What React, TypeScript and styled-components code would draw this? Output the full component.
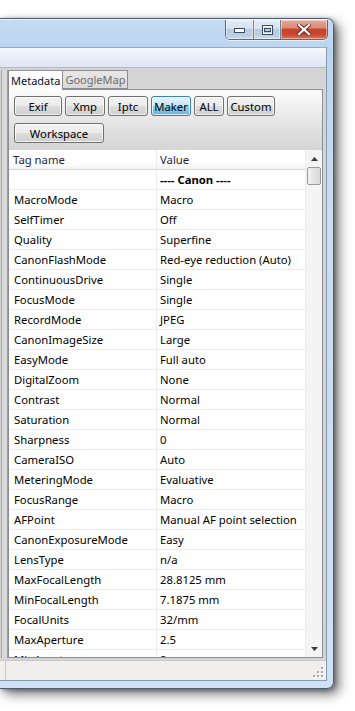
import React from "react";
import styled, { createGlobalStyle } from "styled-components";

const Global = createGlobalStyle`
  html, body { margin: 0; padding: 0; background: #ffffff; }
  body { width: 355px; height: 711px; overflow: hidden; font-family: "Noto Sans", "Open Sans", sans-serif; font-size: 11.3px; color: #000; }
  * { box-sizing: border-box; }
`;

const Page = styled.div`
  width: 355px;
  height: 711px;
  padding-top: 18px;
  overflow: hidden;
`;

const Window = styled.div`
  width: 334px;
  height: 671px;
  display: flex;
  flex-direction: column;
  background: linear-gradient(180deg, #c4dbf2 0px, #bcd5ef 30px, #c9ddf3 200px, #cfe2f5 100%);
  border: 1px solid #4b5e74;
  border-left: none;
  border-radius: 0 7px 7px 0;
  box-shadow: 5px 5px 12px rgba(0, 0, 0, 0.55), 1px 1px 4px rgba(0, 0, 0, 0.35);
`;

const TitleBar = styled.div`
  flex: none;
  height: 28px;
  display: flex;
  justify-content: flex-end;
  align-items: flex-start;
  padding-right: 5px;
  border-top: 1px solid rgba(255, 255, 255, 0.7);
  border-radius: 0 6px 0 0;
`;

const CaptionGroup = styled.div`
  display: flex;
  height: 20px;
  border: 1px solid #5a6b80;
  border-top: none;
  border-radius: 0 0 5px 5px;
  overflow: hidden;
  box-shadow: 0 1px 0 rgba(255, 255, 255, 0.6);
`;

const CaptionButton = styled.div<{ $w: number; $close?: boolean }>`
  width: ${(p) => p.$w}px;
  height: 100%;
  display: flex;
  align-items: center;
  justify-content: center;
  & + & {
    border-left: 1px solid #6f8196;
  }
  background: ${(p) =>
    p.$close
      ? "linear-gradient(180deg, #e9aa9c 0%, #dd8a78 40%, #c8452c 50%, #c8452c 75%, #db7559 100%)"
      : "linear-gradient(180deg, #e4edf7 0%, #d3e1f0 45%, #b9cbe0 50%, #bccee2 80%, #cbdcef 100%)"};
  box-shadow: inset 0 0 0 1px rgba(255, 255, 255, 0.45);
`;

const Body = styled.div`
  flex: 1;
  min-height: 0;
  display: flex;
  padding-right: 6px;
  padding-bottom: 7px;
`;

const Client = styled.div`
  flex: 1;
  min-height: 0;
  display: flex;
  flex-direction: column;
  border-right: 1px solid #8799ad;
  border-bottom: 1px solid #8799ad;
  background: #f0f0f0;
`;

const MenuStrip = styled.div`
  flex: none;
  height: 21px;
  background: linear-gradient(180deg, #f6f8fc 0%, #e8edf7 50%, #dfe6f2 100%);
  border-top: 1px solid #9aaabd;
  border-bottom: 1px solid #b5b9c2;
`;

const Main = styled.div`
  flex: 1;
  min-height: 0;
  display: flex;
  background: #d4d4d4;
  padding: 2px 3px 2px 0;
`;

const LeftStub = styled.div`
  width: 7px;
  margin-left: 1px;
  border-left: 1px solid #a9a9a9;
  border-right: 1px solid #9d9d9d;
  background: #d9d9d9;
`;

const TabWidget = styled.div`
  flex: 1;
  min-height: 0;
  display: flex;
  flex-direction: column;
`;

const TabBar = styled.div`
  flex: none;
  display: flex;
  height: 19px;
  align-items: flex-end;
`;

const Tab = styled.div<{ $active?: boolean }>`
  height: ${(p) => (p.$active ? "20px" : "19px")};
  padding: 0 2px 1px;
  display: flex;
  align-items: center;
  font-size: 11px;
  border: 1px solid #8c8e94;
  border-bottom: ${(p) => (p.$active ? "none" : "1px solid #8c8e94")};
  border-left: ${(p) => (p.$active ? "1px solid #8c8e94" : "none")};
  background: ${(p) => (p.$active ? "#ffffff" : "linear-gradient(180deg, #e8e8e8, #d9d9d9)")};
  color: ${(p) => (p.$active ? "#0c1030" : "#6d6d6d")};
  position: relative;
  z-index: ${(p) => (p.$active ? 1 : 0)};
  margin-bottom: ${(p) => (p.$active ? "-1px" : "0")};
`;

const Pane = styled.div`
  flex: 1;
  min-height: 0;
  display: flex;
  flex-direction: column;
  border: 1px solid #8c8e94;
  background: linear-gradient(180deg, #fcfcfc 0px, #e6e6e6 30px, #d5d5d5 60px, #d3d3d3 100%);
`;

const ButtonArea = styled.div`
  flex: none;
  display: flex;
  flex-direction: column;
  gap: 7px;
  padding: 6px 0 7px 5px;
`;

const ButtonRow = styled.div`
  display: flex;
  gap: 3px;
`;

const Button = styled.div<{ $w: number; $on?: boolean }>`
  width: ${(p) => p.$w}px;
  height: 20px;
  display: flex;
  align-items: center;
  justify-content: center;
  border: 1px solid ${(p) => (p.$on ? "#3c7fb1" : "#707070")};
  border-radius: 3px;
  color: #000;
  background: ${(p) =>
    p.$on
      ? "linear-gradient(180deg, #e5f4fc 0%, #c4e5f6 50%, #98d1ef 51%, #68b3db 100%)"
      : "linear-gradient(180deg, #f2f2f2 0%, #ebebeb 50%, #dddddd 51%, #cfcfcf 100%)"};
  box-shadow: inset 0 0 0 1px rgba(255, 255, 255, 0.7);
`;

const TableWrap = styled.div`
  flex: 1;
  min-height: 0;
  display: flex;
  background: #ffffff;
  overflow: hidden;
`;

const Grid = styled.div`
  flex: 1;
  display: flex;
  flex-direction: column;
  overflow: hidden;
`;

const Row = styled.div<{ $head?: boolean }>`
  height: 20px;
  flex: none;
  display: grid;
  grid-template-columns: 147px 1fr;
  background: ${(p) => (p.$head ? "linear-gradient(180deg, #ffffff 0%, #ffffff 60%, #f3f4f6 100%)" : "#ffffff")};
  border-bottom: 1px solid ${(p) => (p.$head ? "#d5d5d5" : "#ececec")};
`;

const Cell = styled.div<{ $bold?: boolean; $head?: boolean }>`
  display: flex;
  align-items: center;
  padding-left: ${(p) => (p.$head ? "4px" : "5px")};
  white-space: nowrap;
  overflow: hidden;
  font-weight: ${(p) => (p.$bold ? 700 : 400)};
  color: ${(p) => (p.$head ? "#1e2340" : "#000")};
  & + & {
    border-left: 1px solid #ececec;
    padding-left: 3px;
  }
`;

const ScrollBar = styled.div`
  width: 17px;
  display: flex;
  flex-direction: column;
  background: #f4f4f4;
  border-left: 1px solid #ececec;
`;

const ScrollArrow = styled.div`
  height: 17px;
  flex: none;
  display: flex;
  align-items: center;
  justify-content: center;
`;

const Thumb = styled.div`
  flex: none;
  height: 18px;
  margin: 0 1px;
  border: 1px solid #9a9a9a;
  border-radius: 2px;
  background: linear-gradient(90deg, #f3f3f3, #e4e4e4 50%, #d9d9d9);
`;

const Track = styled.div`
  flex: 1;
`;

const StatusBar = styled.div`
  flex: none;
  height: 20px;
  display: flex;
  background: #f0efee;
  border-top: 1px solid #c9c9c9;
  position: relative;
`;

const StatusSeg = styled.div`
  width: 6px;
  border-right: 1px solid #c8c8c8;
`;

const Grip = styled.svg`
  position: absolute;
  right: 2px;
  bottom: 2px;
`;

const rows: [string, string][] = [
  ["MacroMode", "Macro"],
  ["SelfTimer", "Off"],
  ["Quality", "Superfine"],
  ["CanonFlashMode", "Red-eye reduction (Auto)"],
  ["ContinuousDrive", "Single"],
  ["FocusMode", "Single"],
  ["RecordMode", "JPEG"],
  ["CanonImageSize", "Large"],
  ["EasyMode", "Full auto"],
  ["DigitalZoom", "None"],
  ["Contrast", "Normal"],
  ["Saturation", "Normal"],
  ["Sharpness", "0"],
  ["CameraISO", "Auto"],
  ["MeteringMode", "Evaluative"],
  ["FocusRange", "Macro"],
  ["AFPoint", "Manual AF point selection"],
  ["CanonExposureMode", "Easy"],
  ["LensType", "n/a"],
  ["MaxFocalLength", "28.8125 mm"],
  ["MinFocalLength", "7.1875 mm"],
  ["FocalUnits", "32/mm"],
  ["MaxAperture", "2.5"],
  ["MinAperture", "8"],
];

const MinGlyph = () => (
  <svg width="11" height="6" viewBox="0 0 11 6">
    <rect x="0.5" y="1.5" width="10" height="4" fill="#ffffff" stroke="#3b4b5e" />
  </svg>
);
const MaxGlyph = () => (
  <svg width="11" height="10" viewBox="0 0 11 10">
    <rect x="0.5" y="0.5" width="10" height="9" fill="none" stroke="#3b4b5e" />
    <rect x="1.5" y="1.5" width="8" height="7" fill="none" stroke="#ffffff" />
    <rect x="2.5" y="3.5" width="6" height="3" fill="none" stroke="#3b4b5e" />
  </svg>
);
const CloseGlyph = () => (
  <svg width="14" height="11" viewBox="0 0 14 11">
    <path d="M2 1 L12 10 M12 1 L2 10" stroke="#5a2a22" strokeWidth="4" strokeLinecap="square" />
    <path d="M2 1 L12 10 M12 1 L2 10" stroke="#ffffff" strokeWidth="2.2" strokeLinecap="square" />
  </svg>
);

export default function App() {
  return (
    <>
      <Global />
      <Page>
        <Window>
          <TitleBar>
            <CaptionGroup>
              <CaptionButton $w={27}>
                <MinGlyph />
              </CaptionButton>
              <CaptionButton $w={27}>
                <MaxGlyph />
              </CaptionButton>
              <CaptionButton $w={47} $close>
                <CloseGlyph />
              </CaptionButton>
            </CaptionGroup>
          </TitleBar>
          <Body>
            <Client>
              <MenuStrip />
              <Main>
                <LeftStub />
                <TabWidget>
                  <TabBar>
                    <Tab $active>Metadata</Tab>
                    <Tab>GoogleMap</Tab>
                  </TabBar>
                  <Pane>
                    <ButtonArea>
                      <ButtonRow>
                        <Button $w={48}>Exif</Button>
                        <Button $w={40}>Xmp</Button>
                        <Button $w={40}>Iptc</Button>
                        <Button $w={40} $on>
                          Maker
                        </Button>
                        <Button $w={30}>ALL</Button>
                        <Button $w={48}>Custom</Button>
                      </ButtonRow>
                      <ButtonRow>
                        <Button $w={90}>Workspace</Button>
                      </ButtonRow>
                    </ButtonArea>
                    <TableWrap>
                      <Grid>
                        <Row $head>
                          <Cell $head>Tag name</Cell>
                          <Cell $head>Value</Cell>
                        </Row>
                        <Row>
                          <Cell />
                          <Cell $bold>---- Canon ----</Cell>
                        </Row>
                        {rows.map(([k, v]) => (
                          <Row key={k}>
                            <Cell>{k}</Cell>
                            <Cell>{v}</Cell>
                          </Row>
                        ))}
                      </Grid>
                      <ScrollBar>
                        <ScrollArrow>
                          <svg width="7" height="4" viewBox="0 0 7 4">
                            <path d="M0 4 L3.5 0 L7 4 Z" fill="#3c3c3c" />
                          </svg>
                        </ScrollArrow>
                        <Thumb />
                        <Track />
                        <ScrollArrow>
                          <svg width="7" height="4" viewBox="0 0 7 4">
                            <path d="M0 0 L3.5 4 L7 0 Z" fill="#3c3c3c" />
                          </svg>
                        </ScrollArrow>
                      </ScrollBar>
                    </TableWrap>
                  </Pane>
                </TabWidget>
              </Main>
              <StatusBar>
                <StatusSeg />
                <Grip width="11" height="11" viewBox="0 0 11 11">
                  {[
                    [8, 0],
                    [8, 4],
                    [4, 4],
                    [8, 8],
                    [4, 8],
                    [0, 8],
                  ].map(([x, y]) => (
                    <g key={`${x}-${y}`}>
                      <rect x={x + 1} y={y + 1} width="2" height="2" fill="#ffffff" />
                      <rect x={x} y={y} width="2" height="2" fill="#a8a8a8" />
                    </g>
                  ))}
                </Grip>
              </StatusBar>
            </Client>
          </Body>
        </Window>
      </Page>
    </>
  );
}
